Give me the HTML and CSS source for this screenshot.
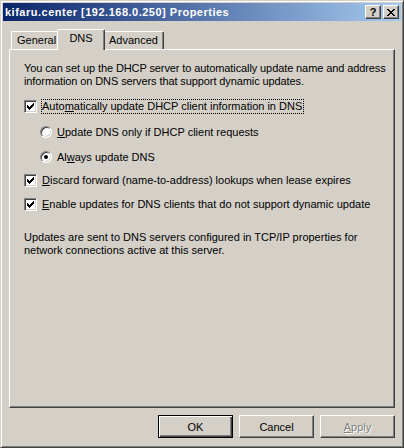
FILE: index.html
```html
<!DOCTYPE html>
<html lang="en">
<head>
  <meta charset="UTF-8" />
  <title>kifaru.center [192.168.0.250] Properties</title>
  <link rel="stylesheet" href="styles.css">
</head>
<body>

  <div class="window">
    <div class="titlebar">
      <span class="title">kifaru.center [192.168.0.250] Properties</span>
      <div class="caption-btns">
        <span class="cap-btn help">?</span>
        <span class="cap-btn close">
          <svg width="8" height="7" viewBox="0 0 8 7" shape-rendering="crispEdges">
            <path d="M0 0h2v1H0zM6 0h2v1H6zM1 1h2v1H1zM5 1h2v1H5zM2 2h4v1H2zM3 3h2v1H3zM2 4h4v1H2zM1 5h2v1H1zM5 5h2v1H5zM0 6h2v1H0zM6 6h2v1H6z" fill="#000"/>
          </svg>
        </span>
      </div>
    </div>

    <div class="tabs">
      <div class="tab">General</div>
      <div class="tab active">DNS</div>
      <div class="tab">Advanced</div>
    </div>

    <div class="panel">
      <p class="text intro">You can set up the DHCP server to automatically update name and address<br>information on DNS servers that support dynamic updates.</p>

      <div class="opt row-auto">
        <span class="check"><svg width="7" height="7" viewBox="0 0 7 7" shape-rendering="crispEdges"><path d="M0 2h1v3H0zM1 3h1v3H1zM2 4h1v3H2zM3 3h1v3H3zM4 2h1v3H4zM5 1h1v3H5zM6 0h1v3H6z" fill="#000"/></svg></span>
        <span class="label focus">Auto<u>m</u>atically update DHCP client information in DNS</span>
      </div>

      <div class="opt sub row-r1">
        <span class="radio"></span>
        <span class="label"><u>U</u>pdate DNS only if DHCP client requests</span>
      </div>

      <div class="opt sub row-r2">
        <span class="radio on"></span>
        <span class="label">Al<u>w</u>ays update DNS</span>
      </div>

      <div class="opt row-c2">
        <span class="check"><svg width="7" height="7" viewBox="0 0 7 7" shape-rendering="crispEdges"><path d="M0 2h1v3H0zM1 3h1v3H1zM2 4h1v3H2zM3 3h1v3H3zM4 2h1v3H4zM5 1h1v3H5zM6 0h1v3H6z" fill="#000"/></svg></span>
        <span class="label"><u>D</u>iscard forward (name-to-address) lookups when lease expires</span>
      </div>

      <div class="opt row-c3">
        <span class="check"><svg width="7" height="7" viewBox="0 0 7 7" shape-rendering="crispEdges"><path d="M0 2h1v3H0zM1 3h1v3H1zM2 4h1v3H2zM3 3h1v3H3zM4 2h1v3H4zM5 1h1v3H5zM6 0h1v3H6z" fill="#000"/></svg></span>
        <span class="label"><u>E</u>nable updates for DNS clients that do not support dynamic update</span>
      </div>

      <p class="text note">Updates are sent to DNS servers configured in TCP/IP properties for<br>network connections active at this server.</p>
    </div>

    <div class="buttons">
      <button class="btn default">OK</button>
      <button class="btn">Cancel</button>
      <button class="btn disabled"><u>A</u>pply</button>
    </div>
  </div>

</body>
</html>
```

FILE: styles.css
```css
* {
  margin: 0;
  padding: 0;
  box-sizing: border-box;
}

body {
  background: #d4d0c8;
  font-family: "Liberation Sans", Arial, sans-serif;
  font-size: 11px;
  color: #000;
}

.window {
  width: 404px;
  height: 448px;
  background: #d4d0c8;
  border: 1px solid;
  border-color: #d4d0c8 #404040 #404040 #d4d0c8;
  box-shadow: inset 1px 1px #fff, inset -1px -1px #808080;
  padding: 2px;
  display: flex;
  flex-direction: column;
}

/* title bar */
.titlebar {
  height: 18px;
  background: linear-gradient(to right, #0a246a, #a6caf0);
  display: flex;
  align-items: center;
  justify-content: space-between;
  padding: 0 2px;
}

.title {
  color: #fff;
  font-weight: bold;
  font-size: 11px;
  line-height: 13px;
  letter-spacing: 0.5px;
  white-space: nowrap;
}

.caption-btns {
  display: flex;
  gap: 2px;
}

.cap-btn {
  width: 16px;
  height: 14px;
  background: #d4d0c8;
  border: 1px solid;
  border-color: #fff #404040 #404040 #fff;
  box-shadow: inset -1px -1px #808080;
  display: flex;
  align-items: center;
  justify-content: center;
}

.cap-btn.help {
  font-weight: bold;
  font-size: 11px;
  line-height: 12px;
  padding-bottom: 1px;
}

.cap-btn.close svg {
  display: block;
  margin-left: -1px;
}

/* tabs */
.tabs {
  display: flex;
  align-items: flex-end;
  height: 20px;
  margin: 8px 6px 0;
  padding-left: 2px;
}

.tab {
  height: 18px;
  min-width: 44px;
  padding: 2px 5px 0;
  line-height: 13px;
  text-align: center;
  border-top: 1px solid #fff;
  border-left: 1px solid #fff;
  border-right: 1px solid #404040;
  border-radius: 2px 2px 0 0;
  box-shadow: inset -1px 0 #808080;
}

.tab:first-child {
  width: 48px;
}

.tab.active {
  position: relative;
  z-index: 1;
  width: 48px;
  height: 21px;
  margin: 0 -2px -1px;
  background: #d4d0c8;
}

/* page */
.panel {
  height: 359px;
  margin: 0 6px;
  padding: 12px 14px 0;
  border: 1px solid;
  border-color: #fff #404040 #404040 #fff;
  box-shadow: inset -1px -1px #808080;
}

.text {
  line-height: 13px;
  white-space: nowrap;
}

.intro {
  letter-spacing: -0.1px;
}

.opt {
  display: flex;
  align-items: center;
  height: 15px;
}

.opt.sub {
  padding-left: 16px;
}

.row-auto { margin-top: 11px; }
.row-r1 { margin-top: 11px; }
.row-r2 { margin-top: 10px; }
.row-c2 { margin-top: 8px; }
.row-c3 { margin-top: 9px; }
.note { margin-top: 19px; }

.check {
  width: 13px;
  height: 13px;
  background: #fff;
  border: 1px solid;
  border-color: #808080 #fff #fff #808080;
  box-shadow: inset 1px 1px #404040, inset -1px -1px #d4d0c8;
  display: flex;
  align-items: center;
  justify-content: center;
}

.check svg {
  display: block;
}

.radio {
  width: 12px;
  height: 12px;
  margin-bottom: 1px;
  border-radius: 50%;
  background: #fff;
  border: 1px solid;
  border-color: #808080 #fff #fff #808080;
  box-shadow: inset 1px 1px #404040, inset -1px -1px #d4d0c8;
  display: flex;
  align-items: center;
  justify-content: center;
}

.radio.on::after {
  content: "";
  width: 4px;
  height: 4px;
  border-radius: 50%;
  background: #000;
}

.label {
  margin-left: 4px;
  padding-right: 1px;
  line-height: 13px;
  border: 1px dotted transparent;
  white-space: nowrap;
}

.label.focus {
  border-color: #000;
}

/* dialog buttons */
.buttons {
  display: flex;
  justify-content: flex-end;
  gap: 6px;
  margin: 7px 6px 0;
}

.btn {
  width: 75px;
  height: 23px;
  background: #d4d0c8;
  font-family: inherit;
  font-size: 11px;
  color: #000;
  border: 1px solid;
  border-color: #fff #404040 #404040 #fff;
  box-shadow: inset -1px -1px #808080;
}

.btn.default {
  border-color: #000;
  box-shadow: inset 1px 1px #fff, inset -1px -1px #404040, inset -2px -2px #808080;
}

.btn.disabled {
  color: #808080;
  text-shadow: 1px 1px #fff;
}
```
